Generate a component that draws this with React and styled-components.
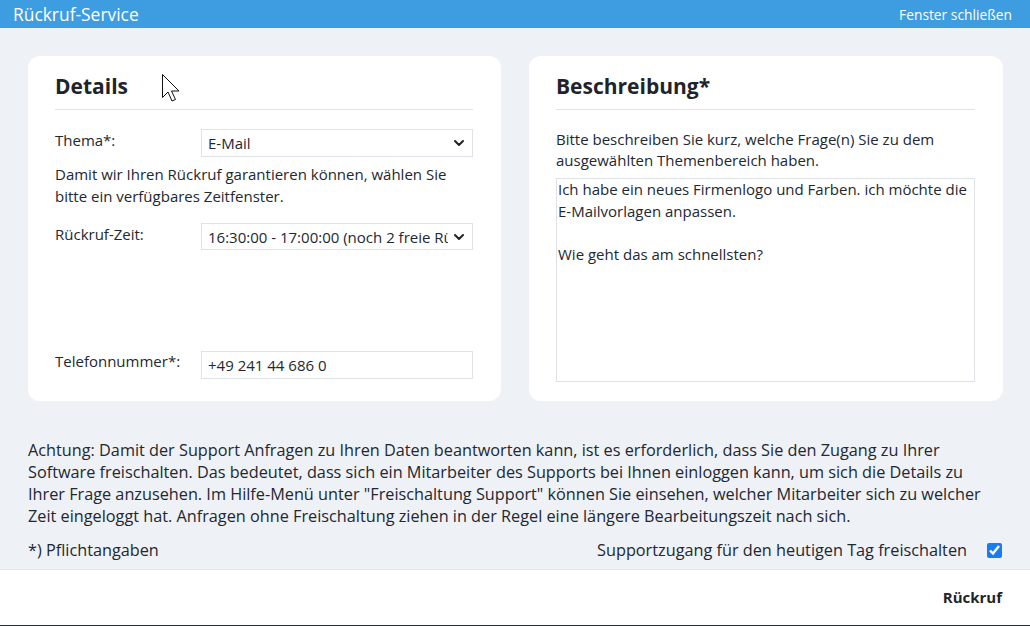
import React, { useState } from 'react';
import styled, { createGlobalStyle } from 'styled-components';
import { ChevronDown } from 'lucide-react';

const GlobalStyle = createGlobalStyle`
  html, body {
    margin: 0;
    padding: 0;
    height: 626px;
    overflow: hidden;
  }
  body {
    font-family: "Open Sans", "Liberation Sans", sans-serif;
    color: #222831;
    background: #eef1f5;
  }
  * { box-sizing: border-box; }
`;

const Window = styled.div`
  width: 1030px;
  height: 626px;
  display: flex;
  flex-direction: column;
  background: #eef1f5;
  position: relative;
`;

const TitleBar = styled.div`
  height: 28px;
  flex-shrink: 0;
  background: #3e9ce0;
  color: #fff;
  display: flex;
  align-items: center;
  justify-content: space-between;
  padding: 0 18px 0 13px;

  h1 {
    margin: 0;
    font-size: 17.4px;
    font-weight: 400;
    line-height: 28px;
  }
`;

const CloseLink = styled.span`
  font-size: 13.8px;
  cursor: pointer;
`;

const Content = styled.div`
  flex: 1;
  padding: 28px 27px 0 28px;
  display: flex;
  flex-direction: column;
`;

const Cards = styled.div`
  display: grid;
  grid-template-columns: 473px 474px;
  gap: 28px;
  height: 345px;
`;

const Card = styled.section`
  background: #fff;
  border-radius: 12px;
  padding: 15px 28px 22px 27px;
  display: flex;
  flex-direction: column;
`;

const CardTitle = styled.h2`
  margin: 0 0 19px;
  font-size: 21px;
  font-weight: 700;
  line-height: 28px;
  padding: 1px 0 9px;
  border-bottom: 1px solid #e2e4e8;
  color: #1f242b;
`;

const Row = styled.div`
  display: grid;
  grid-template-columns: 146px 1fr;
  align-items: start;
  margin-top: ${p => p.$mt || '0'};
`;

const Label = styled.label`
  font-size: 15px;
  line-height: 21px;
  padding-top: ${p => p.$offset || 0}px;
`;

const SelectWrap = styled.div`
  position: relative;
  height: ${p => p.$h || 28}px;

  svg {
    position: absolute;
    right: 6px;
    top: 50%;
    transform: translateY(-50%);
    pointer-events: none;
    color: #222;
  }
`;

const Select = styled.select`
  appearance: none;
  width: 100%;
  height: 100%;
  border: 1px solid #dfe2e6;
  border-radius: 0;
  background: #fff;
  font-family: inherit;
  font-size: 15px;
  color: #222831;
  padding: 0 24px 0 6px;
  white-space: nowrap;
  overflow: hidden;
  text-overflow: clip;
  outline: none;
`;

const Input = styled.input`
  width: 100%;
  height: 28px;
  border: 1px solid #dfe2e6;
  font-family: inherit;
  font-size: 15px;
  color: #222831;
  padding: 0 6px;
  outline: none;
`;

const Hint = styled.p`
  margin: ${p => p.$m || '0'};
  font-size: 15px;
  line-height: ${p => p.$lh || 21}px;
`;

const TextArea = styled.textarea`
  flex: 1;
  width: 100%;
  resize: none;
  border: 1px solid #dfe2e6;
  font-family: inherit;
  font-size: 15px;
  line-height: 21.5px;
  color: #222831;
  padding: 0 1px;
  margin: 7px 0 -3px;
  outline: none;
`;

const Notice = styled.p`
  margin: 38px 0 0;
  font-size: 16.25px;
  line-height: 22px;
  color: #222831;
`;

const Bottom = styled.div`
  display: flex;
  justify-content: space-between;
  align-items: center;
  margin-top: 12px;
  font-size: 16.25px;
  line-height: 22px;
  padding-right: 1px;
`;

const Unlock = styled.label`
  display: flex;
  align-items: center;
  gap: 20px;

  input {
    width: 15px;
    height: 15px;
    margin: 0;
    accent-color: #1a7cf0;
  }
`;

const Footer = styled.footer`
  height: 57px;
  flex-shrink: 0;
  margin-top: 8px;
  margin-bottom: 1px;
  background: #fff;
  border-top: 1px solid #e3e6ea;
  border-bottom: 1px solid #22314a;
  display: flex;
  align-items: center;
  justify-content: flex-end;
  padding: 0 28px 1px 0;
`;

const SubmitButton = styled.button`
  border: 0;
  background: none;
  font-family: inherit;
  font-size: 15px;
  font-weight: 700;
  color: #1f242b;
  cursor: pointer;
  padding: 0;
`;

const Cursor = styled.svg`
  position: absolute;
  left: 161px;
  top: 73px;
`;

export default function App() {
  const [topic, setTopic] = useState('email');
  const [slot, setSlot] = useState('1630');
  const [phone, setPhone] = useState('+49 241 44 686 0');
  const [text, setText] = useState(
    'Ich habe ein neues Firmenlogo und Farben. ich möchte die E-Mailvorlagen anpassen.\n\nWie geht das am schnellsten?'
  );
  const [unlock, setUnlock] = useState(true);

  return (
    <Window>
      <GlobalStyle />
      <TitleBar>
        <h1>Rückruf-Service</h1>
        <CloseLink>Fenster schließen</CloseLink>
      </TitleBar>

      <Content>
        <Cards>
          <Card>
            <CardTitle>Details</CardTitle>
            <Row>
              <Label $offset={1}>Thema*:</Label>
              <SelectWrap>
                <Select value={topic} onChange={e => setTopic(e.target.value)}>
                  <option value="email">E-Mail</option>
                  <option value="other">Sonstiges</option>
                </Select>
                <ChevronDown size={16} strokeWidth={3} />
              </SelectWrap>
            </Row>
            <Hint $m="6px 0 0" $lh={22}>
              Damit wir Ihren Rückruf garantieren können, wählen Sie bitte ein verfügbares Zeitfenster.
            </Hint>
            <Row $mt="16px">
              <Label $offset={1}>Rückruf-Zeit:</Label>
              <SelectWrap $h={27}>
                <Select value={slot} onChange={e => setSlot(e.target.value)}>
                  <option value="1630">16:30:00 - 17:00:00 (noch 2 freie Rückrufe)</option>
                </Select>
                <ChevronDown size={16} strokeWidth={3} />
              </SelectWrap>
            </Row>
            <Row $mt="auto">
              <Label $offset={0}>Telefonnummer*:</Label>
              <Input value={phone} onChange={e => setPhone(e.target.value)} />
            </Row>
          </Card>

          <Card>
            <CardTitle>Beschreibung*</CardTitle>
            <Hint>
              Bitte beschreiben Sie kurz, welche Frage(n) Sie zu dem ausgewählten Themenbereich haben.
            </Hint>
            <TextArea value={text} onChange={e => setText(e.target.value)} />
          </Card>
        </Cards>

        <Notice>
          Achtung: Damit der Support Anfragen zu Ihren Daten beantworten kann, ist es erforderlich, dass Sie den Zugang zu Ihrer Software freischalten. Das bedeutet, dass sich ein Mitarbeiter des Supports bei Ihnen einloggen kann, um sich die Details zu Ihrer Frage anzusehen. Im Hilfe-Menü unter "Freischaltung Support" können Sie einsehen, welcher Mitarbeiter sich zu welcher Zeit eingeloggt hat. Anfragen ohne Freischaltung ziehen in der Regel eine längere Bearbeitungszeit nach sich.
        </Notice>

        <Bottom>
          <span>*) Pflichtangaben</span>
          <Unlock>
            Supportzugang für den heutigen Tag freischalten
            <input type="checkbox" checked={unlock} onChange={e => setUnlock(e.target.checked)} />
          </Unlock>
        </Bottom>
      </Content>

      <Footer>
        <SubmitButton>Rückruf</SubmitButton>
      </Footer>

      <Cursor width="22" height="30" viewBox="0 0 22 30">
        <path d="M1.5 1.5 L1.5 24.5 L7 19 L11 28 L14.5 26.5 L10.5 18 L18 18 Z" fill="#fff" stroke="#111" strokeWidth="1" strokeLinejoin="miter" />
      </Cursor>
    </Window>
  );
}
